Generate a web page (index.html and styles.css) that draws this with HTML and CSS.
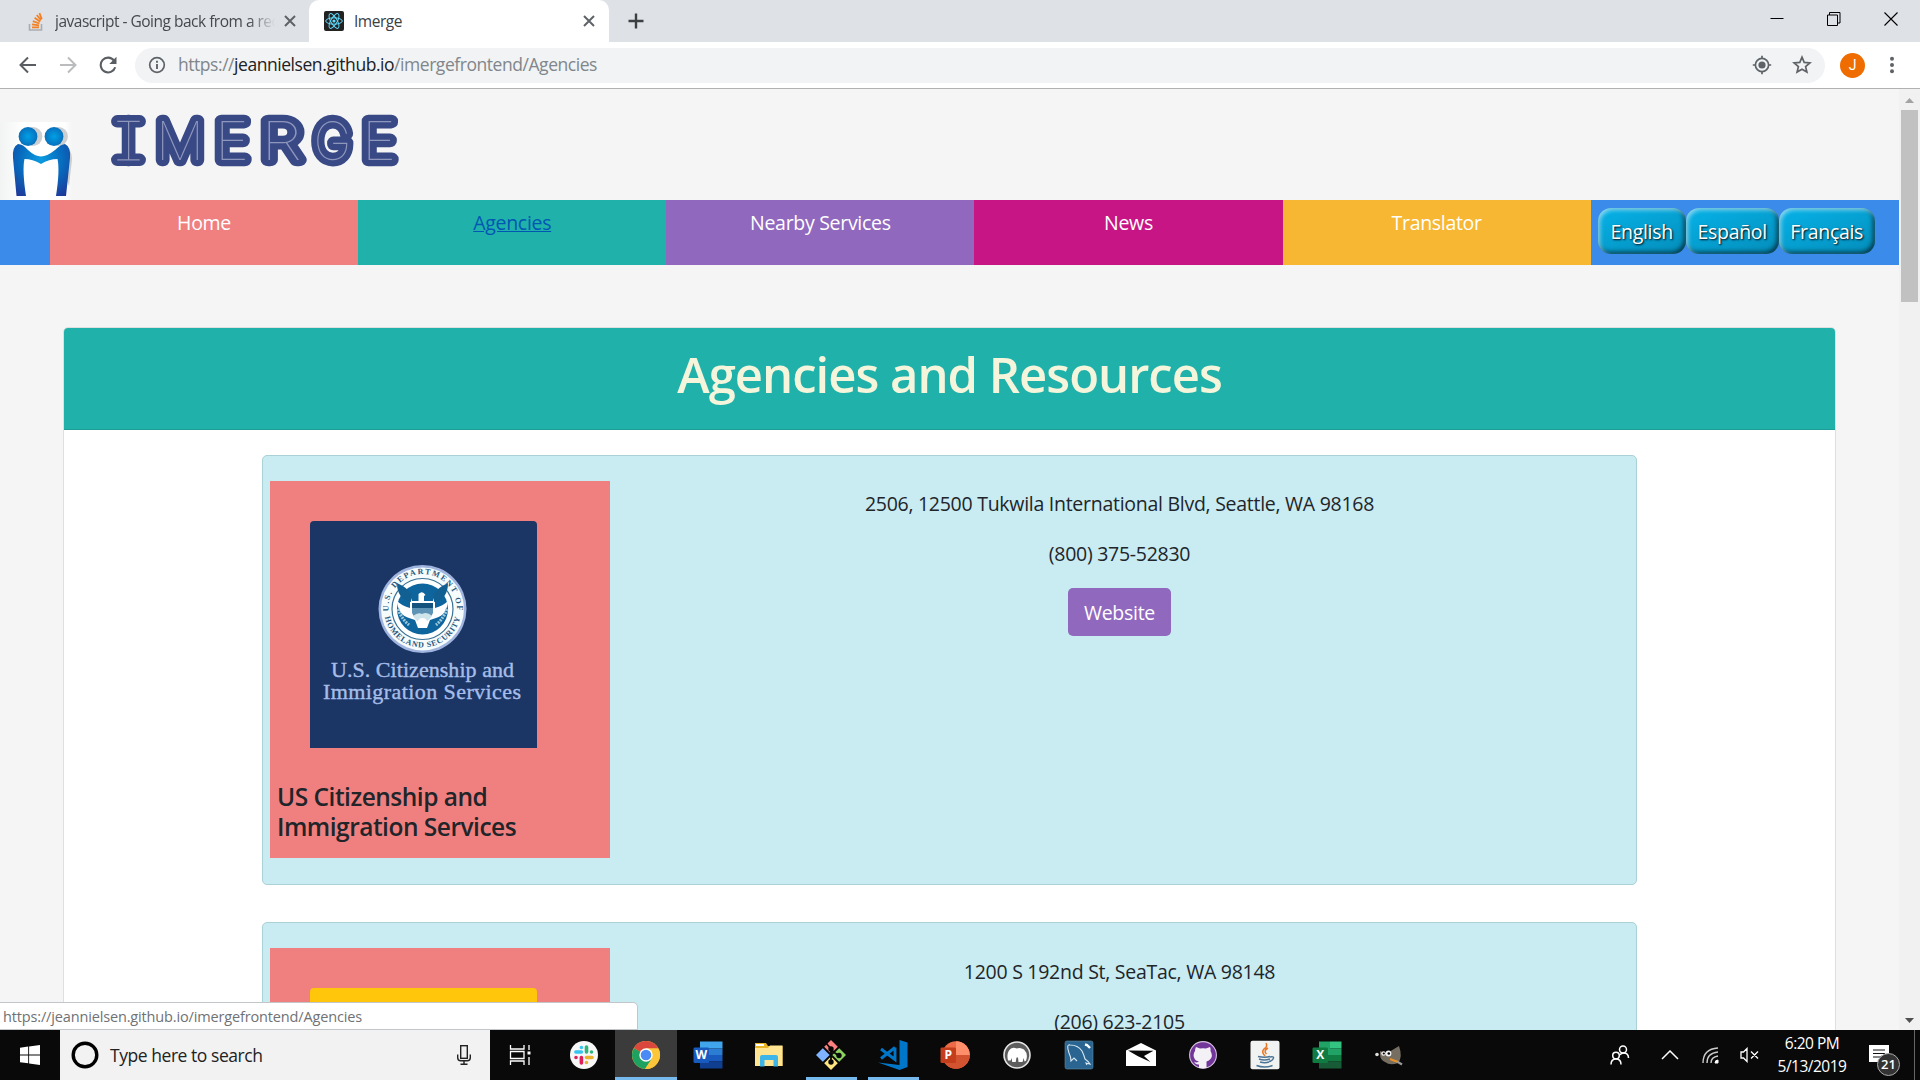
FILE: index.html
```html
<!DOCTYPE html>
<html lang="en">
<head>
<meta charset="utf-8">
<title>Imerge</title>
<link rel="stylesheet" href="styles.css">
</head>
<body>
<div class="screen">
  <header class="tabstrip">
    <div class="tab tab-idle">
      <svg class="so-icon" viewBox="0 0 16 20"><path d="M1.500 13v6h12v-6" fill="none" stroke="#a9adb3" stroke-width="1.600"/><path d="M4 16.300h7M4 13.400l7 1M4.800 10.200l6.600 2.300M6.600 6.800l5.600 4M8.800 4l4.200 5.300M11.400 2.200l2.400 6" stroke="#f48024" stroke-width="1.800"/></svg>
      <span class="tab-title fade">javascript - Going back from a redirect</span>
      <svg class="tab-x" viewBox="0 0 12 12"><path d="M1 1l10 10M11 1L1 11" stroke="#5f6368" stroke-width="2"/></svg>
    </div>
    <div class="tab tab-active">
      <svg class="react-icon" viewBox="0 0 20 20"><rect width="20" height="20" rx="2" fill="#222"/><g fill="none" stroke="#61dafb" stroke-width="1"><ellipse cx="10" cy="10" rx="8.300" ry="3.200"/><ellipse cx="10" cy="10" rx="8.300" ry="3.200" transform="rotate(60 10 10)"/><ellipse cx="10" cy="10" rx="8.300" ry="3.200" transform="rotate(120 10 10)"/></g><circle cx="10" cy="10" r="1.600" fill="#61dafb"/></svg>
      <span class="tab-title">Imerge</span>
      <svg class="tab-x" viewBox="0 0 12 12"><path d="M1 1l10 10M11 1L1 11" stroke="#5f6368" stroke-width="2"/></svg>
    </div>
    <svg class="tab-plus" viewBox="0 0 16 16"><path d="M8 .5v15M.5 8h15" stroke="#3c4043" stroke-width="2.400"/></svg>
    <div class="win-buttons">
      <svg viewBox="0 0 14 14"><path d="M.5 6.500h13" stroke="#000"/></svg>
      <svg viewBox="0 0 14 14"><path d="M.5 3h10v10.500H.5zM2.500 3V.5H13V11h-2.500" fill="none" stroke="#000"/></svg>
      <svg viewBox="0 0 14 14"><path d="M.5.5l13 13M13.500.5l-13 13" stroke="#000" stroke-width="1.100"/></svg>
    </div>
  </header>
  <div class="toolbar">
    <svg class="nav-icon" viewBox="0 0 18 18"><path d="M17 9H2M9 1.500L1.500 9 9 16.500" fill="none" stroke="#5a5e63" stroke-width="2"/></svg>
    <svg class="nav-icon" viewBox="0 0 18 18"><path d="M1 9h15M9 1.500L16.500 9 9 16.500" fill="none" stroke="#babcbe" stroke-width="2"/></svg>
    <svg class="nav-icon" viewBox="0 0 18 18"><path d="M15 4.500A7.400 7.400 0 1 0 16.200 11.200" fill="none" stroke="#5a5e63" stroke-width="2.100"/><path d="M17.500.8v7.200h-7.200z" fill="#5a5e63"/></svg>
    <div class="omnibox">
      <svg class="info" viewBox="0 0 18 18"><circle cx="9" cy="9" r="7.300" fill="none" stroke="#5f6368" stroke-width="1.700"/><path d="M9 8v5M9 4.800v1.900" stroke="#5f6368" stroke-width="1.900"/></svg>
      <span class="url">https://<b>jeannielsen.github.io</b>/imergefrontend/Agencies</span>
      <svg class="target" viewBox="0 0 20 20"><circle cx="10" cy="10" r="6.600" fill="none" stroke="#5f6368" stroke-width="1.700"/><circle cx="10" cy="10" r="3.600" fill="#5f6368"/><path d="M10 .8v3M10 16.200v3M.8 10h3M16.200 10h3" stroke="#5f6368" stroke-width="1.700"/></svg>
      <svg class="star" viewBox="0 0 20 20"><path d="M10 2.200l2.200 5.200 5.700.5-4.300 3.700 1.300 5.500-4.900-2.900-4.900 2.900 1.300-5.500L2.100 7.900l5.700-.5z" fill="none" stroke="#5f6368" stroke-width="1.700"/></svg>
    </div>
    <span class="avatar">J</span>
    <svg class="dots" viewBox="0 0 6 18"><g fill="#5f6368"><circle cx="3" cy="2.700" r="2"/><circle cx="3" cy="9" r="2"/><circle cx="3" cy="15.300" r="2"/></g></svg>
  </div>

  <div class="viewport">
    <main class="page">
      <div class="brand">
        <svg class="brand-logo" viewBox="0 0 72 78">
          <defs>
            <radialGradient id="head"><stop offset="0" stop-color="#00a0e6"/><stop offset="1" stop-color="#0870bd"/></radialGradient>
            <radialGradient id="arms" gradientUnits="userSpaceOnUse" cx="41" cy="38" r="42"><stop offset="0" stop-color="#0a9be0"/><stop offset=".55" stop-color="#0868bb"/><stop offset="1" stop-color="#20389a"/></radialGradient>
            <linearGradient id="paper"><stop offset="0" stop-color="#f2f3f3"/><stop offset=".35" stop-color="#fff"/><stop offset=".9" stop-color="#fefefe"/><stop offset="1" stop-color="#f5f5f5"/></linearGradient>
          </defs>
          <rect width="72" height="78" fill="url(#paper)"/>
          <g fill="#cdced0"><circle cx="33" cy="14.500" r="9.400"/><circle cx="58.500" cy="14.500" r="9.400"/><path d="M60 22q12 2 12 16l-3 26-4-10z"/></g>
          <circle cx="28" cy="14.500" r="9.400" fill="url(#head)"/><circle cx="54" cy="14.500" r="9.400" fill="url(#head)"/>
          <path d="M18 22q-6 3-5 14l3.500 38H26q-4-26-1.500-37 8 0 16.500 5 8-5 16.500-5Q60 48 56 74h10l4-38q1-11-5-14-4 0-10 6-8 6.500-14 6.500T28 28q-5-6-10-6z" fill="url(#arms)"/>
        </svg>
        <svg class="brand-name" viewBox="0 0 300 70">
          <path class="slab" d="M12.300 17.300h22.400M12.300 55.800h22.400M23.500 17.300v38.500"/>
          <text y="56" x="17">I</text>
          <text y="56" x="51" textLength="48" lengthAdjust="spacingAndGlyphs">M</text>
          <text y="56" x="110" textLength="34" lengthAdjust="spacingAndGlyphs">E</text>
          <text y="56" x="156" textLength="41" lengthAdjust="spacingAndGlyphs">R</text>
          <text y="56" x="208.500" textLength="38" lengthAdjust="spacingAndGlyphs">G</text>
          <text y="56" x="257" textLength="34" lengthAdjust="spacingAndGlyphs">E</text>
          <path class="inline" d="M12.300 17.300h22.400M12.300 55.800h22.400"/>
        </svg>
      </div>
      <nav class="menu">
        <a class="item home">Home</a>
        <a class="item agencies">Agencies</a>
        <a class="item nearby">Nearby Services</a>
        <a class="item news">News</a>
        <a class="item translator">Translator</a>
        <div class="langs"><button class="en">English</button><button class="es">Español</button><button class="fr">Français</button></div>
      </nav>
      <section class="panel">
        <h1>Agencies and Resources</h1>
        <div class="panel-body">
          <article class="agency">
            <div class="side">
              <svg class="pic" viewBox="0 0 227 227">
                <defs><path id="ringTop" d="M80.300 98a34 34 0 1 1 64.400 0"/><path id="ringBottom" d="M74 88a38.500 38.500 0 0 0 77 0"/></defs>
                <path d="M0 227V4q0-4 4-4h219q4 0 4 4v223z" fill="#1b3664"/>
                <circle cx="112.500" cy="88" r="44" fill="#9fb4de"/><circle cx="112.500" cy="88" r="41.500" fill="#f6fbfc"/>
                <circle cx="112.500" cy="88" r="30.500" fill="#fff" stroke="#3b7194" stroke-width="1.200"/>
                <circle cx="112.500" cy="88" r="25.500" fill="#0e659d"/>
                <path d="M87 62q1 12 13 17v8q-8-2-13-7 1 14 12 17l6 2 3 8h9l3-8 6-2q11-3 12-17-5 5-13 7v-8q12-5 13-17l-12 9-3 9h-21l-3-9z" fill="#fff"/>
                <path d="M87 62q0 16 14 19v-8q-3-6-14-11zM138 62q0 16-14 19v-8q3-6 14-11z" fill="#125f92"/>
                <path d="M108.500 80v-7q4-4 7 1l-1.500 1v5z" fill="#fff"/>
                <path d="M102 82h21v10q-3 7-10.500 9-7.500-2-10.500-9z" fill="#5d93b4"/><path d="M102 82h21v5h-21z" fill="#15537f"/>
                <path d="M103 95q5-4 9-2 5-3 10 2-4 6-9.500 7-6-1-9.500-7z" fill="#cfe5ec"/>
                <path d="M88 88q3 9 11 16M137 88q-3 9-11 16" fill="none" stroke="#9dc8da" stroke-width="3" stroke-dasharray="2 1"/>
                <circle cx="112.500" cy="102" r="5" fill="#fff"/>
                <g class="seal-text"><text><textPath href="#ringTop" textLength="112" startOffset="8">U.S. DEPARTMENT OF</textPath></text><text><textPath href="#ringBottom" textLength="104" startOffset="8">HOMELAND SECURITY</textPath></text></g>
                <g class="pic-text"><text x="21" y="156" textLength="183">U.S. Citizenship and</text><text x="13" y="178" textLength="198">Immigration Services</text></g>
              </svg>
              <h4>US Citizenship and<br>Immigration Services</h4>
            </div>
            <div class="facts">
              <p>2506, 12500 Tukwila International Blvd, Seattle, WA 98168</p>
              <p>(800) 375-52830</p>
              <button class="site">Website</button>
            </div>
          </article>
          <article class="agency">
            <div class="side">
              <svg class="pic" viewBox="0 0 227 227"><path d="M0 227V4q0-4 4-4h219q4 0 4 4v223z" fill="#ffc60b"/></svg>
            </div>
            <div class="facts lower">
              <p>1200 S 192nd St, SeaTac, WA 98148</p>
              <p>(206) 623-2105</p>
            </div>
          </article>
        </div>
      </section>
    </main>
    <div class="scrollbar">
      <svg viewBox="0 0 21 21"><path d="M6 14l4.500-5 4.500 5z" fill="#a3a3a3"/></svg>
      <span class="thumb"></span>
      <svg class="down" viewBox="0 0 21 21"><path d="M6 9l4.500 5 4.500-5z" fill="#505050"/></svg>
    </div>
    <div class="status"><span>https://jeannielsen.github.io/imergefrontend/Agencies</span></div>
  </div>

  <footer class="taskbar">
    <div class="start"><svg viewBox="0 0 20 20"><path d="M0 2.800l8.200-1.200v7.900H0zM9.100 1.500L20 0v9.500H9.100zM0 10.400h8.200v7.900L0 17.200zM9.100 10.400H20V20L9.100 18.400z" fill="#fff"/></svg></div>
    <div class="search">
      <svg class="cortana" viewBox="0 0 28 28"><circle cx="14" cy="14" r="11.800" fill="none" stroke="#000" stroke-width="3.400"/></svg>
      <span>Type here to search</span>
      <svg class="mic" viewBox="0 0 14 20"><rect x="3.700" y=".7" width="6.600" height="12.600" fill="none" stroke="#222" stroke-width="1.400"/><path d="M.7 9.500v3.200q0 3 3 3h6.600q3 0 3-3V9.500M7 16v3M3.500 19.300h7" fill="none" stroke="#222" stroke-width="1.400"/></svg>
    </div>
    <div class="app taskview"><svg viewBox="0 0 30 30"><path d="M5.500 5v4h13.500V5M5.500 25v-4h13.500v4M5.500 11.500H19v7H5.500zM24 5v5M24 17v8" fill="none" stroke="#fff" stroke-width="1.300"/><path d="M22.500 11.500h3v3h-3z" fill="#fff"/></svg></div>
    <div class="app"><svg viewBox="0 0 30 30"><circle cx="15" cy="15" r="14" fill="#f7f7f7"/><g stroke-width="3.600" stroke-linecap="round"><path d="M12.400 7.500v0M12.400 12h-5.500" stroke="#36c5f0"/><path d="M17.500 7v5M22.500 12v0" stroke="#2eb67d"/><path d="M17.500 17.500H23M17.500 22.500v0" stroke="#ecb22e"/><path d="M12.400 17.500V23M7 17.500v0" stroke="#e01e5a"/></g></svg></div>
    <div class="app current"><svg viewBox="0 0 30 30"><circle cx="15" cy="15" r="14" fill="#fbc63a"/><path d="M15 15L2.900 8A14 14 0 0 0 14 29l7-10.500z" fill="#1da261"/><path d="M15 15L2.900 8A14 14 0 0 1 27.400 8.600H15z" fill="#da483d"/><path d="M14 29A14 14 0 0 0 27.400 8.600H15l6 9.900z" fill="#fbc63a"/><circle cx="15" cy="15" r="6.700" fill="#fff"/><circle cx="15" cy="15" r="5.300" fill="#4a8af4"/></svg></div>
    <div class="app"><svg viewBox="0 0 30 30"><path d="M7 1.500h22.500v7H7z" fill="#41a5ee"/><path d="M7 8.500h22.500V15H7z" fill="#2b7cd3"/><path d="M7 15h22.500v6.500H7z" fill="#185abd"/><path d="M7 21.500h22.500v7H7z" fill="#103f91"/><rect x=".5" y="7.500" width="15.500" height="15.500" rx="1.300" fill="#185abd"/><text x="8.200" y="19.300" class="office">W</text></svg></div>
    <div class="app"><svg viewBox="0 0 30 30"><path d="M1 3h11l2 3h14.500v20H1z" fill="#e8b526"/><path d="M1 8h13l2-2.500h12.500V26H1z" fill="#ffe592"/><path d="M2 4h8v2H2z" fill="#fff"/><path d="M6 26.500V17q0-2 2-2h14q2 0 2 2v9.500h-4.500V20h-9v6.500z" fill="#3db5e8"/></svg></div>
    <div class="app open"><svg viewBox="0 0 30 30"><path d="M15 0l7.500 7.500-7.500 7.500-7.500-7.500z" fill="#ff7e7e"/><path d="M7.500 7.500L15 15l-7.500 7.500L0 15z" fill="#80b3ff"/><path d="M22.500 7.500L30 15l-7.500 7.500L15 15z" fill="#8dd35f"/><path d="M15 15l7.500 7.500L15 30l-7.500-7.500z" fill="#ffe680"/><path d="M7 7l16 16M23 7L7 23M10 3l5 6v13M15 10l8 6" fill="none" stroke="#080808" stroke-width="1.800"/><g fill="#080808"><circle cx="15" cy="9" r="2.700"/><circle cx="15" cy="22" r="2.700"/><circle cx="23" cy="15.500" r="2.700"/></g></svg></div>
    <div class="app open"><svg viewBox="0 0 30 30"><path d="M21.500 0L29.500 2.500v24.500l-8 3L0 22.500l21.500 2.500z" fill="#0076c9"/><path d="M17 7.500v12L3 9M17 7.500L3 18.500" fill="none" stroke="#0076c9" stroke-width="2.900"/></svg></div>
    <div class="app"><svg viewBox="0 0 30 30"><circle cx="16" cy="15" r="13.800" fill="#ed6c47"/><path d="M16 1.200A13.800 13.800 0 0 1 29.800 15H16z" fill="#ff8f6b"/><path d="M2.200 15h27.600a13.800 13.800 0 0 1-27.600 0z" fill="#d35230"/><rect x=".5" y="7.500" width="15.500" height="15.500" rx="1.300" fill="#c43e1c"/><text x="8.200" y="19.300" class="office">P</text></svg></div>
    <div class="app"><svg viewBox="0 0 30 30"><circle cx="15" cy="15" r="13" fill="#5d5d5d" stroke="#e6e6e6" stroke-width="1.600"/><path d="M6 20.500q-2-8 3-12 3-1.500 5.500 0 4-1.500 7.500 1 4 4 2.500 9.500 0 2-2 2.500l-.8-3.500-1.200 4h-4l-.5-4.500h-1.500l-.8 4.500h-3.500l-.5-4-1 2.500z" fill="#fff"/></svg></div>
    <div class="app"><svg viewBox="0 0 30 30"><rect x="1" y="1" width="28" height="28" rx="2" fill="#2a6592" stroke="#5a8aa8" stroke-width=".6"/><path d="M5 13q-3-9 1-8 8 0 12 6 2 4 3 8 3 2 5 5l-4-1 1 2M5 13q2 4 2 8l3-3 3 3" fill="none" stroke="#d7e7f0" stroke-width="1.100"/><path d="M21 4.500l2 .5 3 3" fill="none" stroke="#fff" stroke-width="2.400"/></svg></div>
    <div class="app"><svg viewBox="0 0 30 30"><path d="M0 10.500L15 3l15 7.500V26H0z" fill="#fff"/><path d="M2 10.500l25.500.3-9.500 5.300L24.500 22 12 16.300z" fill="#090909"/></svg></div>
    <div class="app"><svg viewBox="0 0 30 30"><circle cx="15" cy="15" r="13.400" fill="#72369a" stroke="#d5c0dd" stroke-width="1.100"/><path d="M8 7l4 1.500q3-.7 6 0L22 7q1 2 .5 4 3 5-.5 8.500-1.500 1.500-3.500 2V28h-7.500v-3.500q-3.500.5-5-3l2 1q1.500 0 3-1-3-.5-4-2-3-4 0-8.500Q7 9 8 7z" fill="#f3f1f5"/></svg></div>
    <div class="app"><svg viewBox="0 0 30 30"><rect x=".5" y=".8" width="29" height="28.500" rx="2" fill="#f1f2f2"/><path d="M16 3q2 4-2 6-3 3 1 7M18 8q-5 3-1.500 6" fill="none" stroke="#e87722" stroke-width="1.500"/><path d="M8 16.500q7 1.500 12 0M9 19q5 2 11 0M10 22q5 1.500 9 0M6.500 25.500q8 3 16 0M20 17q5-1 3 2-1 2-4 2.500" fill="none" stroke="#4b7394" stroke-width="1.400"/></svg></div>
    <div class="app"><svg viewBox="0 0 30 30"><path d="M7 1.500h11v14H7z" fill="#21a366"/><path d="M18 1.500h11.500v7H18z" fill="#33c481"/><path d="M18 8.500h11.500V15H18z" fill="#21a366"/><path d="M7 15h22.500v6.500H7z" fill="#107c41"/><path d="M7 21.500h22.500v7H7z" fill="#185c37"/><rect x=".5" y="7.500" width="15.500" height="15.500" rx="1.300" fill="#107c41"/><text x="8.200" y="19.300" class="office">X</text></svg></div>
    <div class="app"><svg viewBox="0 0 30 30"><path d="M6 11q5 3 9 1l10-6q4 11-1 17-8 3-13-1-5-2-5-8z" fill="#766f61"/><circle cx="9.500" cy="13.500" r="2.300" fill="#eee"/><circle cx="14.500" cy="13.500" r="2.900" fill="#f4f4f4"/><circle cx="9.800" cy="13.500" r="1.100"/><circle cx="14.800" cy="13.500" r="1.300"/><circle cx="3" cy="14.500" r="1.800" fill="#ddd"/><path d="M16 19l8 3" stroke="#e9912a" stroke-width="2"/><path d="M23 21.500l5 3" stroke="#999" stroke-width="2.200"/></svg></div>
    <div class="tray">
      <svg class="people" viewBox="0 0 20 20"><g fill="none" stroke="#fff" stroke-width="1.500"><circle cx="13" cy="4.500" r="3.500"/><circle cx="6" cy="10.500" r="3.300"/><path d="M1 19.500q0-5.500 5-5.500t5 5.500M10 10q1-2 3.500-2 5 0 5 5"/></g></svg>
      <svg class="chev" viewBox="0 0 18 10"><path d="M1 9l8-8 8 8" fill="none" stroke="#fff" stroke-width="1.500"/></svg>
      <svg class="wifi" viewBox="0 0 17 17"><g fill="none" stroke="#ccc" stroke-width="1.400"><path d="M1 16Q1 2 16 1M5 16Q5 6 16 5M9 16q0-6 7-7"/></g><path d="M13 16q0-3 3-3v3z" fill="#fff" stroke="#fff"/></svg>
      <svg class="mute" viewBox="0 0 19 16"><path d="M1 5h2.500L7 1.500v13L3.500 11H1zM11 4.500l7 7M18 4.500l-7 7" fill="none" stroke="#fff" stroke-width="1.300"/></svg>
      <div class="clock"><span>6:20 PM</span><span>5/13/2019</span></div>
      <div class="notes"><svg viewBox="0 0 20 20"><path d="M0 0h20v17H12l-3 3v-3H0z" fill="#fff"/><path d="M4 5h12M4 8.500h12M4 12h8" stroke="#111" stroke-width="1.200"/></svg><span class="badge">21</span></div>
    </div>
  </footer>
</div>
</body>
</html>
```
FILE: styles.css
```css
* { box-sizing: border-box; }
body { margin: 0; font-family: "Open Sans", "Noto Sans", sans-serif; overflow: hidden; }
svg { display: block; flex: none; }
button { font: inherit; letter-spacing: inherit; border: 0; padding: 0; }
.screen { width: 1920px; height: 1080px; display: flex; flex-direction: column; overflow: hidden; }

/* browser tabs */
.tabstrip { height: 42px; flex: none; background: #dee1e6; display: flex; align-items: center; }
.tab { height: 42px; display: flex; align-items: center; font-size: 15.500px; color: #45494d; }
.tab-idle { width: 309px; padding: 0 13px 0 28px; }
.tab-active { width: 300px; padding: 0 14px 0 15px; background: #fff; border-radius: 10px 10px 0 0; color: #3c4043; }
.so-icon { width: 16px; height: 20px; margin-right: 11px; }
.react-icon { width: 20px; height: 20px; margin-right: 10px; }
.tab-title { flex: 1; white-space: nowrap; overflow: hidden; letter-spacing: -.5px; padding-bottom: 1px; }
.fade { -webkit-mask-image: linear-gradient(90deg, #000 88%, transparent); mask-image: linear-gradient(90deg, #000 88%, transparent); margin-right: 9px; }
.tab-x { width: 12px; height: 12px; }
.tab-plus { width: 16px; height: 16px; margin-left: 19px; }
.win-buttons { margin: 0 22px 5px auto; display: flex; gap: 43px; }
.win-buttons svg { width: 14px; height: 14px; }

.toolbar { height: 47px; flex: none; border-bottom: 1px solid #b0b1b3; background: #fff; display: flex; align-items: center; padding: 0 24px 0 19px; }
.nav-icon { width: 18px; height: 18px; margin-right: 22px; }
.nav-icon:nth-child(3) { margin-right: 18px; }
.omnibox { width: 1690px; height: 35px; border-radius: 18px; background: #f1f3f4; display: flex; align-items: center; padding: 0 13px; }
.info { width: 18px; height: 18px; margin-right: 12px; }
.url { flex: 1; color: #80868b; font-size: 17.500px; letter-spacing: -.45px; padding-bottom: 2px; }
.url b { font-weight: 400; color: #202124; }
.target { width: 20px; height: 20px; margin-right: 20px; }
.star { width: 20px; height: 20px; }
.avatar { width: 25px; height: 25px; border-radius: 50%; background: #ef6c00; color: #fff; font: 14px/25px Roboto, sans-serif; text-align: center; margin: 0 24px 0 15px; }
.dots { width: 6px; height: 18px; }

/* page area */
.viewport { height: 941px; flex: none; display: flex; position: relative; overflow: hidden; }
.page { width: 1899px; height: 941px; background: #f5f5f5; color: #212529; overflow: hidden; }
.brand { height: 111px; display: flex; align-items: flex-end; }
.brand-logo { width: 72px; height: 78px; }
.brand-name { width: 300px; height: 70px; margin: 0 0 26px 33px; overflow: visible; }
.brand-name text { font: 100 53px Inter, "Open Sans", sans-serif; fill: #8e96bc; stroke: #394985; stroke-width: 12.500px; stroke-linejoin: round; paint-order: stroke; }
.slab { fill: none; stroke: #394985; stroke-width: 12.500px; stroke-linecap: round; }
.inline { fill: none; stroke: #8e96bc; stroke-width: 1.200px; }

.menu { height: 65px; padding-left: 50px; background: #3b8beb; display: flex; font-size: 19.500px; letter-spacing: -.3px; }
.item { width: 308.150px; padding-top: 10px; line-height: 26px; text-align: center; color: #fff; }
.home { background: #f08080; }
.agencies { background: #20b2aa; color: #0056b3; text-decoration: underline; }
.nearby { background: #9068be; }
.news { background: #c71585; }
.translator { background: #f7b733; }
.langs { display: flex; padding: 8px 0 0 7px; }
.langs button { height: 46px; padding-top: 1px; border-radius: 13px; color: #fff; text-shadow: 1px 1px 2px #000; background: linear-gradient(160deg, #06b2e8, #048dba); box-shadow: inset 2px 2px 4px rgba(255,255,255,.55), inset -2px -2px 5px rgba(0,0,0,.65); }
.en { width: 88px; }
.es { width: 93px; }
.fr { width: 96px; }

.panel { width: 1773px; height: 900px; margin: 62px 0 0 63px; border: 1px solid #dfdfdf; border-radius: 5px; background: #fff; }
.panel h1 { margin: 0; height: 102px; border-bottom: 1px solid #1d9f98; border-radius: 4px 4px 0 0; background: #20b2aa; color: beige; text-align: center; font-size: 49px; letter-spacing: -1px; line-height: 93px; font-weight: 600; }
.panel-body { padding: 25px 198px; display: flex; flex-direction: column; gap: 37px; }
.agency { height: 430px; border: 1px solid #a9d1d6; border-radius: 5px; background: #c9ebf2; display: flex; padding: 25px 7px; }
.side { width: 340px; height: 377px; padding: 40px 0 0 7px; background: #f08080; }
.pic { width: 227px; height: 227px; margin-left: 33px; }
.pic-text text { font: 22px "Liberation Serif", serif; fill: #a6bde8; stroke: #a6bde8; stroke-width: .4px; }
.seal-text text { font: bold 8px "Liberation Serif", serif; fill: #26587c; }
.side h4 { margin: 34px 0 0; font-size: 24.500px; letter-spacing: -.5px; line-height: 30px; font-weight: 600; }
.facts { flex: 1; text-align: center; font-size: 19.500px; letter-spacing: -.27px; padding-top: 8px; }
.lower { padding-top: 9px; }
.facts p { margin: 0 0 20px; line-height: 30px; }
.site { width: 103px; height: 48px; margin-top: -1px; border-radius: 5px; background: #9068be; color: #fff; }

.scrollbar { width: 21px; background: #f1f1f1; display: flex; flex-direction: column; align-items: center; }
.scrollbar svg { width: 21px; height: 21px; }
.thumb { width: 17px; height: 192px; background: #c1c1c1; }
.down { margin-top: auto; }
.status { position: absolute; left: 0; bottom: 0; width: 638px; height: 28px; border: 1px solid #c3c6c8; border-left: 0; border-radius: 0 5px 0 0; background: #fff; color: #6f7275; font-size: 14.500px; letter-spacing: -.15px; line-height: 28px; padding-left: 3px; }

/* taskbar */
.taskbar { height: 50px; flex: none; background: #090909; display: flex; }
.start { width: 60px; display: flex; align-items: center; justify-content: center; }
.start svg { width: 20px; height: 20px; }
.search { width: 430px; background: #f2f2f2; display: flex; align-items: center; padding: 0 19px 0 11px; font-size: 17.500px; letter-spacing: -.45px; color: #222; }
.search span { flex: 1; margin-left: 11px; }
.cortana { width: 28px; height: 28px; }
.mic { width: 14px; height: 20px; }
.app { width: 61.950px; display: flex; flex: none; align-items: center; justify-content: center; }
.app svg { width: 30px; height: 30px; }
.taskview { width: 60px; margin-right: 2.700px; }
.current { background: #3b3b3b; box-shadow: inset 0 -3px #76b9ed; }
.open { background: linear-gradient(#76b9ed, #76b9ed) center bottom / 51px 3px no-repeat; }
.office { font: bold 12px "Open Sans", sans-serif; fill: #fff; text-anchor: middle; }
.tray { margin-left: auto; width: 310px; display: flex; align-items: center; color: #fff; }
.people { width: 20px; height: 20px; }
.chev { width: 18px; height: 10px; margin-left: 31px; }
.wifi { width: 17px; height: 17px; margin-left: 23px; }
.mute { width: 19px; height: 16px; margin-left: 21px; }
.clock { width: 74px; margin-left: 16px; font-size: 15.500px; letter-spacing: -.5px; line-height: 23px; display: flex; flex-direction: column; align-items: center; }
.notes { position: relative; width: 46px; height: 50px; margin-left: 20px; padding-top: 15px; border-right: 1px solid #666; }
.notes svg { width: 20px; height: 20px; }
.badge { position: absolute; left: 8px; top: 23px; width: 23px; height: 23px; border: 1px solid #aaa; border-radius: 50%; background: #333; font-size: 13px; line-height: 21px; font-weight: 600; text-align: center; }
```
